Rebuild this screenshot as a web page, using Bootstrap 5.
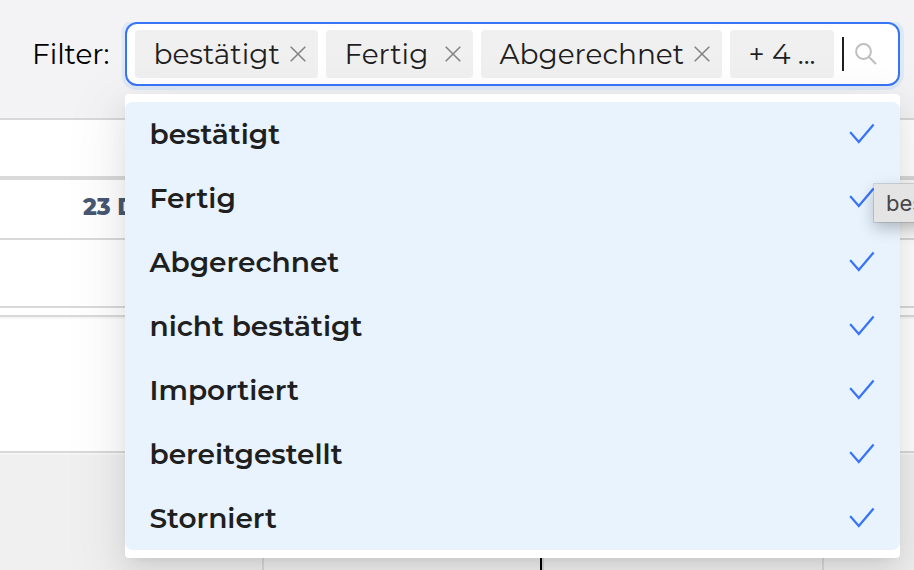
<!DOCTYPE html>
<html lang="de">
<head>
<meta charset="utf-8">
<meta name="viewport" content="width=device-width, initial-scale=1">
<title>Filter</title>
<link href="https://cdn.jsdelivr.net/npm/bootstrap@5.3.0/dist/css/bootstrap.min.css" rel="stylesheet">
<style>
  body { font-family: Montserrat, Inter, "Open Sans", sans-serif; font-size: 28px; line-height: 48px; color: #1f1f1f; background: #f0f0f0; }
  .page { --line: #d9d9d9; }
  .toolbar { background: #f3f3f6; padding: 22px 14px 32px 32px; gap: 16px; border-bottom: 2px solid var(--line); }
  .filter-label { color: #000; line-height: 64px; }
  .multi { border: 2px solid #3875f6; border-radius: 12px; padding: 6px 8px; gap: 8px; background: #fff; box-shadow: 0 0 0 4px #dfe8f7; clip-path: inset(0 -4px -4px -4px); min-width: 0; }
  .tag { background: #f0f0f0; border-radius: 4px; padding: 0 12px 0 18px; height: 48px; white-space: nowrap; }
  .tag-a { min-width: 183px; }
  .tag-b { min-width: 147px; }
  .tag-c { min-width: 241px; }
  .tag-more { min-width: 104px; }
  .remove { border: 0; background: none; padding: 0; line-height: 0; color: #858585; }
  .entry { flex: 1 1 0; min-width: 0; }
  .search { border: 0; outline: 0; background: none; padding: 0; width: 0; min-width: 0; }
  .caret { width: 2px; height: 34px; background: #1f1f1f; }
  .glass { margin-right: 13px; }
  .options { left: 0; right: 0; top: 100%; margin-top: 8px; padding: 8px 0; border: 0; border-radius: 4px; font-size: 28px; color: #1f1f1f;
    box-shadow: 0 12px 32px rgba(0,0,0,.08), 0 6px 12px -8px rgba(0,0,0,.12), 0 18px 56px 16px rgba(0,0,0,.05); }
  .option { padding: 8px 24px; font-weight: 600; color: #1f1f1f; background: #e8f3fe; line-height: 48px; }
  .option:hover { background: #e8f3fe; }
  .options li:first-child .option { border-radius: 8px 8px 0 0; }
  .options li:last-child .option { border-radius: 0 0 8px 8px; }
  .tip { left: calc(100% - 26px); top: 18px; padding: 0 12px; background: #e4e4e4; color: #464646; font: 22px/38px Inter, sans-serif; white-space: nowrap;
    box-shadow: 0 0 0 1px rgba(0,0,0,.12), 0 6px 16px rgba(0,0,0,.25); }
  .band { background: #fff; border-bottom: 2px solid var(--line); }
  .band-top { height: 60px; border-bottom-width: 4px; }
  .band-days { height: 60px; }
  .band-all { height: 68px; }
  .band-gap { height: 9px; }
  .band-body { height: 136px; }
  .band-body, .columns { border-top: 2px solid #f6f6f6; }
  .day { flex: 0 0 280px; border-right: 2px solid var(--line); }
  .day-first { flex-basis: 264px; }
  .day-name { width: 264px; padding-left: 83px; font-size: 23px; line-height: 54px; font-weight: 800; color: #475772; white-space: nowrap; }
  .now { width: 2px; background: #000; }
</style>
</head>
<body>
<div class="page d-flex flex-column vh-100 overflow-hidden">
  <header class="toolbar d-flex position-relative z-3">
    <label class="filter-label flex-shrink-0" for="q">Filter:</label>
    <div class="position-relative flex-grow-1">
      <div class="multi d-flex align-items-center">
        <span class="tag tag-a d-flex align-items-center justify-content-between">bestätigt
          <button class="remove" type="button" aria-label="bestätigt entfernen"><svg width="16" height="16" viewBox="0 0 16 16" fill="none" stroke="currentColor" stroke-width="1.6"><path d="M.7 1.7l14.6 14.6M15.3 1.7L.7 16.3" transform="translate(0 -1)"/></svg></button></span>
        <span class="tag tag-b d-flex align-items-center justify-content-between">Fertig
          <button class="remove" type="button" aria-label="Fertig entfernen"><svg width="16" height="16" viewBox="0 0 16 16" fill="none" stroke="currentColor" stroke-width="1.6"><path d="M.7 1.7l14.6 14.6M15.3 1.7L.7 16.3" transform="translate(0 -1)"/></svg></button></span>
        <span class="tag tag-c d-flex align-items-center justify-content-between">Abgerechnet
          <button class="remove" type="button" aria-label="Abgerechnet entfernen"><svg width="16" height="16" viewBox="0 0 16 16" fill="none" stroke="currentColor" stroke-width="1.6"><path d="M.7 1.7l14.6 14.6M15.3 1.7L.7 16.3" transform="translate(0 -1)"/></svg></button></span>
        <span class="tag tag-more">+ 4 ...</span>
        <span class="entry d-flex align-items-center">
          <span class="caret flex-shrink-0"></span>
          <input class="search flex-grow-1" id="q" type="text" autocomplete="off">
        </span>
        <svg class="glass flex-shrink-0" width="22" height="22" viewBox="0 0 22 22" fill="none" stroke="#bfbfbf" stroke-width="2"><circle cx="8.5" cy="8.5" r="7.4"/><path d="M14 14l7 7"/></svg>
      </div>
      <ul class="options dropdown-menu show" role="listbox" aria-multiselectable="true">
        <li><button class="option dropdown-item d-flex align-items-center justify-content-between" type="button" role="option" aria-selected="true">bestätigt<svg width="28" height="24" viewBox="0 0 28 24" fill="none" stroke="#3875f6" stroke-width="2.3"><path d="M1.8 10.8h1L10.8 20 25.6 2.4"/></svg></button></li>
        <li class="position-relative"><button class="option dropdown-item d-flex align-items-center justify-content-between" type="button" role="option" aria-selected="true">Fertig<svg width="28" height="24" viewBox="0 0 28 24" fill="none" stroke="#3875f6" stroke-width="2.3"><path d="M1.8 10.8h1L10.8 20 25.6 2.4"/></svg></button>
          <span class="tip position-absolute" role="tooltip">bestätigt</span></li>
        <li><button class="option dropdown-item d-flex align-items-center justify-content-between" type="button" role="option" aria-selected="true">Abgerechnet<svg width="28" height="24" viewBox="0 0 28 24" fill="none" stroke="#3875f6" stroke-width="2.3"><path d="M1.8 10.8h1L10.8 20 25.6 2.4"/></svg></button></li>
        <li><button class="option dropdown-item d-flex align-items-center justify-content-between" type="button" role="option" aria-selected="true">nicht bestätigt<svg width="28" height="24" viewBox="0 0 28 24" fill="none" stroke="#3875f6" stroke-width="2.3"><path d="M1.8 10.8h1L10.8 20 25.6 2.4"/></svg></button></li>
        <li><button class="option dropdown-item d-flex align-items-center justify-content-between" type="button" role="option" aria-selected="true">Importiert<svg width="28" height="24" viewBox="0 0 28 24" fill="none" stroke="#3875f6" stroke-width="2.3"><path d="M1.8 10.8h1L10.8 20 25.6 2.4"/></svg></button></li>
        <li><button class="option dropdown-item d-flex align-items-center justify-content-between" type="button" role="option" aria-selected="true">bereitgestellt<svg width="28" height="24" viewBox="0 0 28 24" fill="none" stroke="#3875f6" stroke-width="2.3"><path d="M1.8 10.8h1L10.8 20 25.6 2.4"/></svg></button></li>
        <li><button class="option dropdown-item d-flex align-items-center justify-content-between" type="button" role="option" aria-selected="true">Storniert<svg width="28" height="24" viewBox="0 0 28 24" fill="none" stroke="#3875f6" stroke-width="2.3"><path d="M1.8 10.8h1L10.8 20 25.6 2.4"/></svg></button></li>
      </ul>
    </div>
  </header>
  <main class="d-flex flex-column flex-grow-1">
    <div class="band band-top"></div>
    <div class="band band-days"><div class="day-name">23 D</div></div>
    <div class="band band-all"></div>
    <div class="band band-gap"></div>
    <div class="band band-body"></div>
    <div class="columns d-flex flex-grow-1 overflow-hidden">
      <div class="day day-first"></div>
      <div class="day d-flex justify-content-end"><div class="now"></div></div>
      <div class="day"></div>
    </div>
  </main>
</div>
<script src="https://cdn.jsdelivr.net/npm/bootstrap@5.3.0/dist/js/bootstrap.bundle.min.js"></script>
</body>
</html>
